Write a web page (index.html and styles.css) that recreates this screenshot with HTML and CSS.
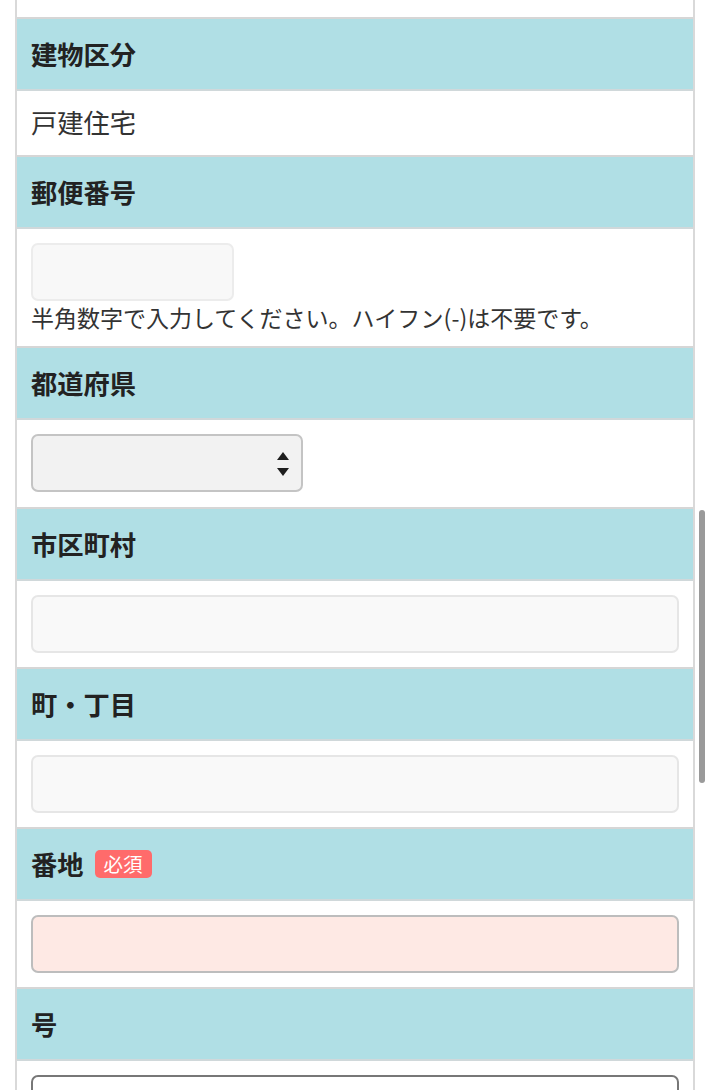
FILE: index.html
```html
<!DOCTYPE html>
<html lang="ja">
<head>
<meta charset="utf-8">
<title>住所入力</title>
<link rel="stylesheet" href="styles.css">
</head>
<body>
<div class="form">
  <div class="cell cell-top"></div>

  <div class="head">建物区分</div>
  <div class="cell cell-value">戸建住宅</div>

  <div class="head">郵便番号</div>
  <div class="cell cell-field cell-zip">
    <div class="input input-zip"></div>
    <p class="help">半角数字で入力してください。ハイフン(-)は不要です。</p>
  </div>

  <div class="head">都道府県</div>
  <div class="cell cell-field cell-select">
    <div class="select">
      <svg class="arrows" width="12" height="25" viewBox="0 0 12 25">
        <path d="M6 0 L12 8 L0 8 Z" fill="#1e1e1e"/>
        <path d="M0 16 L12 16 L6 24 Z" fill="#1e1e1e"/>
      </svg>
    </div>
  </div>

  <div class="head">市区町村</div>
  <div class="cell cell-field"><div class="input input-soft"></div></div>

  <div class="head">町・丁目</div>
  <div class="cell cell-field"><div class="input input-soft"></div></div>

  <div class="head">番地<span class="badge">必須</span></div>
  <div class="cell cell-field"><div class="input input-required"></div></div>

  <div class="head">号</div>
  <div class="cell cell-field"><div class="input input-active"></div></div>
</div>
<div class="scroll-thumb"></div>
</body>
</html>
```

FILE: styles.css
```css
html, body {
  margin: 0;
  padding: 0;
  overflow: hidden;
  background: #ffffff;
}
body {
  font-family: "Noto Sans CJK JP", "Noto Sans", sans-serif;
  color: #333333;
}
.form {
  margin: 0 15px;
  border-left: 2px solid #d9d9d9;
  border-right: 2px solid #d9d9d9;
}
.cell {
  background: #ffffff;
  border-bottom: 2px solid #d6d6d6;
  padding: 0 14px;
}
.cell-top {
  height: 17px;
}
.head {
  height: 72px;
  box-sizing: border-box;
  background: #b0dfe5;
  border-bottom: 2px solid #d0d8da;
  padding: 0 14px;
  display: flex;
  align-items: center;
  font-size: 26.25px;
  font-weight: 700;
  color: #222222;
}
.cell-value {
  height: 64px;
  display: flex;
  align-items: center;
  font-size: 26.25px;
  color: #333333;
  padding-bottom: 2px;
  box-sizing: border-box;
  height: 66px;
}
.cell-field {
  padding-top: 14px;
  padding-bottom: 14px;
}
.cell-zip {
  padding-bottom: 13px;
}
.cell-select {
  padding-bottom: 15px;
}
.input {
  height: 58px;
  box-sizing: border-box;
  border-radius: 7px;
}
.input-zip {
  width: 203px;
  background: #f8f8f8;
  border: 2px solid #ececec;
}
.help {
  margin: 0;
  font-size: 23px;
  line-height: 32px;
  color: #333333;
}
.select {
  width: 272px;
  height: 58px;
  box-sizing: border-box;
  background: #f2f2f2;
  border: 2px solid #c4c4c4;
  border-radius: 7px;
  display: flex;
  align-items: center;
  justify-content: flex-end;
  padding-right: 12px;
  padding-top: 3px;
}
.arrows {
  display: block;
}
.input-soft {
  background: #f9f9f9;
  border: 2px solid #e6e6e6;
}
.input-required {
  background: #fee9e4;
  border: 2px solid #bdbdbd;
}
.input-active {
  background: #ffffff;
  border: 2px solid #777777;
}
.badge {
  margin-left: 11px;
  background: #ff6b6b;
  color: #ffffff;
  font-size: 19.5px;
  font-weight: 400;
  line-height: 28px;
  height: 28px;
  padding: 0 9px;
  border-radius: 5px;
}
.scroll-thumb {
  position: fixed;
  left: 699px;
  top: 510px;
  width: 6px;
  height: 273px;
  border-radius: 3px;
  background: #9a9a9a;
}
```
